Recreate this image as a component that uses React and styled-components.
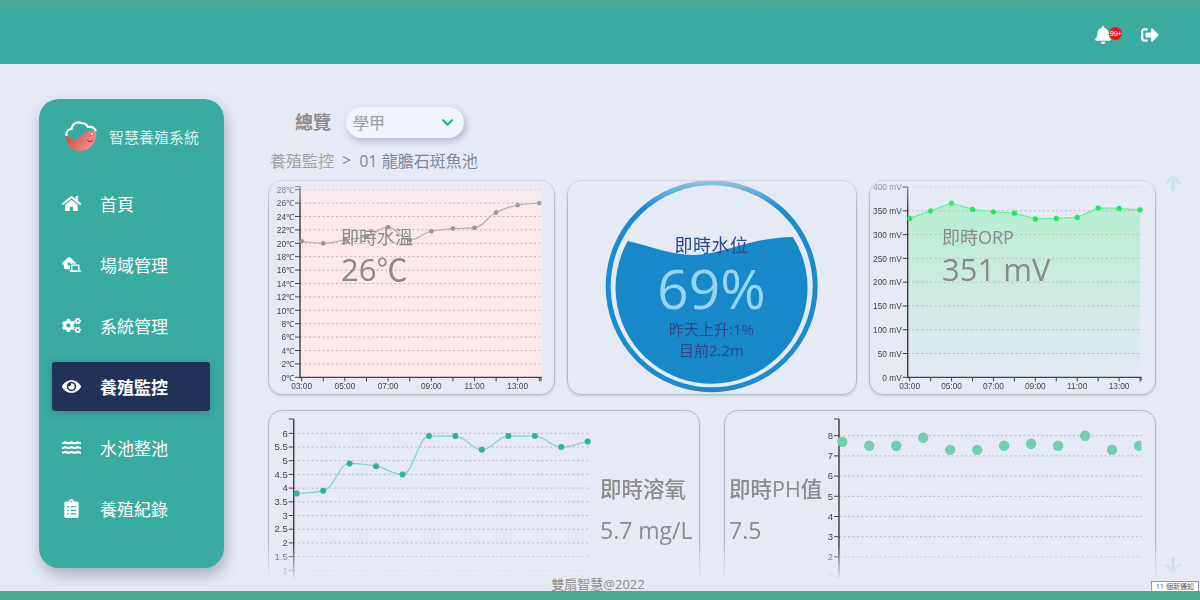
import React from "react";
import styled, { createGlobalStyle } from "styled-components";
import {
  FaHome,
  FaEye,
  FaCogs,
  FaWater,
  FaClipboardList,
  FaBell,
  FaSignOutAlt,
  FaChevronDown,
} from "react-icons/fa";
import { FaHouseLaptop } from "react-icons/fa6";
import { ArrowUp, ArrowDown } from "lucide-react";

const FONT = `"Open Sans", "Noto Sans CJK TC", sans-serif`;

const GlobalStyle = createGlobalStyle`
  html, body { margin: 0; padding: 0; height: 100%; }
  body { background: #e6eaf5; font-family: ${FONT}; overflow: hidden; }
`;

const Page = styled.div`
  width: 1200px;
  height: 600px;
  display: flex;
  flex-direction: column;
  position: relative;
  overflow: hidden;
`;

// Header
const Header = styled.header`
  height: 64px;
  flex: none;
  background: linear-gradient(#4fa88f 0, #3bab9f 11px, #3aaba1 100%);
  display: flex;
  align-items: center;
  justify-content: flex-end;
  gap: 29px;
  padding: 5px 41px 0 0;
  box-sizing: border-box;
  color: #fff;
`;

const BellWrap = styled.div`
  position: relative;
  display: flex;
  width: 18px;
  font-size: 18px;
`;

const Badge = styled.span`
  position: absolute;
  left: 15px;
  top: 1px;
  width: 13px;
  height: 13px;
  border-radius: 50%;
  background: #f01414;
  color: #fff;
  font-size: 8px;
  line-height: 13px;
  text-align: center;
  font-family: "Liberation Sans", sans-serif;
  letter-spacing: -0.6px;
`;

const Body = styled.div`
  height: 514px;
  flex: none;
  display: flex;
`;

// Sidebar
const Sidebar = styled.aside`
  width: 185px;
  height: 469px;
  flex: none;
  margin: 35px 0 0 39px;
  box-sizing: border-box;
  padding: 20px 14px 0 13px;
  background: #3aaba1;
  border-radius: 20px;
  box-shadow: 2px 7px 14px rgba(70, 80, 110, 0.38);
`;

const Brand = styled.div`
  height: 34px;
  display: flex;
  align-items: center;
  gap: 12px;
  padding-left: 13px;
  margin-bottom: 26px;
  color: #d8f1ec;
  font-size: 15px;
  white-space: nowrap;
`;

const Nav = styled.nav`
  display: flex;
  flex-direction: column;
  gap: 12px;
`;

const NavItem = styled.div`
  height: 49px;
  display: flex;
  align-items: center;
  gap: 19px;
  padding-left: 10px;
  border-radius: 3px;
  font-size: 17px;
  color: #fff;
  font-weight: ${(p) => (p.$active ? 700 : 400)};
  background: ${(p) => (p.$active ? "#213158" : "transparent")};
  box-shadow: ${(p) => (p.$active ? "0 2px 8px rgba(30, 60, 90, 0.3)" : "none")};
`;

const NavIcon = styled.span`
  width: 19px;
  display: flex;
  justify-content: center;
  font-size: 19px;
`;

// Main
const Main = styled.main`
  margin-left: 44px;
  flex: 1;
  min-width: 0;
  display: flex;
  flex-direction: column;
`;

const TitleRow = styled.div`
  height: 31px;
  margin-top: 43px;
  display: flex;
  align-items: center;
  gap: 15px;
  padding-left: 27px;
`;

const Title = styled.h1`
  margin: -4px 0 0;
  font-size: 18px;
  font-weight: 700;
  color: #8b8b8b;
`;

const Select = styled.div`
  width: 118px;
  height: 31px;
  box-sizing: border-box;
  display: flex;
  align-items: center;
  justify-content: space-between;
  padding: 0 10px 2px 7px;
  border-radius: 16px;
  background: #f1f4fb;
  box-shadow: 2px 3px 7px rgba(80, 90, 120, 0.35);
  color: #a0a0a0;
  font-size: 16px;
  svg {
    color: #2aaa98;
    font-size: 13px;
    margin-top: 2px;
  }
`;

const Crumb = styled.div`
  height: 20px;
  margin-top: 12px;
  padding-left: 2px;
  display: flex;
  align-items: center;
  gap: 8px;
  font-size: 16px;
  color: #7f8a96;
  span:first-child {
    color: #a2a2a2;
  }
`;

const ScrollArea = styled.div`
  margin-top: 4px;
  height: 406px;
  display: flex;
  gap: 8px;
  padding-top: 6px;
  box-sizing: border-box;
  -webkit-mask-image: linear-gradient(rgba(0, 0, 0, 0.25) 0, #000 34px, #000 370px, transparent 406px);
  mask-image: linear-gradient(rgba(0, 0, 0, 0.25) 0, #000 34px, #000 370px, transparent 406px);
`;

const Rows = styled.div`
  width: 888px;
  flex: none;
  display: flex;
  flex-direction: column;
  gap: 15px;
`;

const TopRow = styled.div`
  display: flex;
  gap: 12px;
`;

const BottomRow = styled.div`
  display: flex;
  gap: 24px;
`;

const Card = styled.section`
  position: relative;
  flex: none;
  box-sizing: border-box;
  width: ${(p) => p.$w}px;
  height: ${(p) => p.$h}px;
  border: 1px solid #b6b9c6;
  border-radius: 14px;
  box-shadow: 0 1px 2px rgba(90, 95, 120, 0.25);
`;

const WideCard = styled(Card)`
  display: flex;
  align-items: flex-start;
`;

const Overlay = styled.div`
  position: absolute;
  left: 72px;
  top: 44px;
  color: #8a8a8a;
  pointer-events: none;
`;

const OverlayLabel = styled.div`
  font-size: 18px;
  line-height: 24px;
`;

const OverlayValue = styled.div`
  font-size: 31px;
  line-height: 38px;
  margin-top: 1px;
  white-space: nowrap;
`;

const Info = styled.div`
  flex: none;
  box-sizing: border-box;
  width: ${(p) => p.$w}px;
  padding-top: 62px;
  padding-left: ${(p) => p.$pad}px;
  color: #8c8c8c;
  white-space: nowrap;
`;

const InfoLabel = styled.div`
  font-size: 21.5px;
  line-height: 32px;
  font-weight: 500;
`;

const InfoValue = styled.div`
  font-size: 23px;
  line-height: 30px;
  margin-top: 10px;
`;

const ChartSvg = styled.svg`
  display: block;
  flex: none;
  text {
    font-family: "Liberation Sans", sans-serif;
    font-size: ${(p) => p.$fs}px;
    fill: #454545;
  }
`;

const Rail = styled.div`
  width: 22px;
  height: 404px;
  margin: -8px 0 0 -2px;
  display: flex;
  flex-direction: column;
  justify-content: space-between;
  color: #abdcdc;
`;

// Water gauge
const GaugeText = styled.div`
  position: absolute;
  inset: 0;
  display: flex;
  flex-direction: column;
  align-items: center;
  color: #2a4a86;
  padding-top: 52px;
  padding-right: 1px;
`;

const GaugeTitle = styled.div`
  font-size: 18px;
  line-height: 24px;
  letter-spacing: 0.5px;
`;

const GaugePercent = styled.div`
  font-size: 55px;
  line-height: 62px;
  font-weight: 400;
  color: #95d6f8;
`;

const GaugeSub = styled.div`
  font-size: 15px;
  line-height: 21px;
`;

const Copyright = styled.div`
  height: 13px;
  flex: none;
  line-height: 13px;
  padding-right: 4px;
  text-align: center;
  font-size: 13px;
  color: #8f8f8f;
`;

const FootBar = styled.footer`
  height: 9px;
  flex: none;
  background: #4da890;
`;

const Toast = styled.div`
  position: absolute;
  right: 1px;
  bottom: 9px;
  width: 48px;
  height: 10px;
  box-sizing: border-box;
  background: #fff;
  border: 1px solid #999;
  border-bottom: 0;
  font-size: 7px;
  line-height: 9px;
  text-align: center;
  color: #555;
  white-space: nowrap;
`;

// monotone cubic path through the points, like d3 curveMonotoneX
const curvePath = (pts) => {
  const slopes = pts.slice(1).map((p, i) => (p.y - pts[i].y) / (p.x - pts[i].x));
  const tangents = pts.map((_, i) => {
    if (i === 0) return slopes[0];
    if (i === pts.length - 1) return slopes[i - 1];
    const a = slopes[i - 1];
    const b = slopes[i];
    if (a * b <= 0) return 0;
    return (2 * a * b) / (a + b);
  });
  let d = `M${pts[0].x} ${pts[0].y}`;
  for (let i = 1; i < pts.length; i++) {
    const dx = (pts[i].x - pts[i - 1].x) / 2.4;
    d += ` C${pts[i - 1].x + dx} ${pts[i - 1].y + tangents[i - 1] * dx} ${pts[i].x - dx} ${pts[i].y - tangents[i] * dx} ${pts[i].x} ${pts[i].y}`;
  }
  return d;
};

const straightPath = (pts) => pts.map((p, i) => `${i ? "L" : "M"}${p.x} ${p.y}`).join(" ");

const HOURS = ["03:00", "04:00", "05:00", "06:00", "07:00", "08:00", "09:00", "10:00", "11:00", "12:00", "13:00", "14:00"];

// All chart coordinates are given in the frame of the svg viewBox
const LineChart = ({ box, fs, axisX, top, bottom, gridEnd, ticks, xFirst, xLast, values, toY, xLabels, bg, fillId, line, dot, dotR, curved, clip }) => {
  const step = (xLast - xFirst) / (values.length - 1);
  const pts = values.map((v, i) => ({ x: xFirst + step * i, y: toY(v) }));
  const path = curved ? curvePath(pts) : straightPath(pts);
  const clipId = `clip-${axisX}`;
  return (
    <ChartSvg $fs={fs} width={box[2]} height={box[3]} viewBox={box.join(" ")}>
      {fillId && (
        <defs>
          <linearGradient id={fillId} x1="0" y1="0" x2="0" y2="1">
            <stop offset="0" stopColor="#a9efc6" stopOpacity="0.8" />
            <stop offset="1" stopColor="#a9efc6" stopOpacity="0.02" />
          </linearGradient>
        </defs>
      )}
      <clipPath id={clipId}>
        <rect x={axisX - 6} y={top - 5} width={gridEnd - axisX + 6} height={bottom - top + 10} />
      </clipPath>
      {bg && <rect x={axisX} y={top} width={gridEnd - axisX} height={bottom - top} fill={bg} />}
      {fillId && (
        <path
          d={`${path} L${pts[pts.length - 1].x} ${bottom} L${pts[0].x} ${bottom} Z`}
          fill={`url(#${fillId})`}
        />
      )}
      {ticks.map((t) => (
        <g key={t.label}>
          {t.v !== 0 && (
            <line x1={axisX} x2={gridEnd} y1={toY(t.v)} y2={toY(t.v)} stroke="#b9b9bd" strokeWidth="1" strokeDasharray="2 2.5" />
          )}
          <line x1={axisX - 5} x2={axisX} y1={toY(t.v)} y2={toY(t.v)} stroke="#444" />
          <text x={axisX - 6} y={toY(t.v) + 3.2} textAnchor="end">
            {t.label}
          </text>
        </g>
      ))}
      <line x1={axisX - 5} x2={axisX} y1={top} y2={top} stroke="#444" />
      <line x1={axisX} x2={axisX} y1={top} y2={bottom + 1} stroke="#444" strokeWidth="1.5" />
      {xLabels && (
        <g>
          <line x1={axisX} x2={gridEnd} y1={bottom} y2={bottom} stroke="#444" strokeWidth="1.2" />
          {pts.map((p, i) => (
            <g key={HOURS[i]}>
              <line x1={p.x} x2={p.x} y1={bottom} y2={bottom + 4} stroke="#444" />
              {i % 2 === 0 && (
                <text x={p.x} y={bottom + 12} textAnchor="middle">
                  {HOURS[i]}
                </text>
              )}
            </g>
          ))}
          <line x1={gridEnd - 1} x2={gridEnd - 1} y1={bottom} y2={bottom + 4} stroke="#444" />
        </g>
      )}
      <g clipPath={clip ? `url(#${clipId})` : undefined}>
        {line && <path d={path} fill="none" stroke={line} strokeWidth="1.2" />}
        {pts.map((p) => (
          <circle key={p.x} cx={p.x} cy={p.y} r={dotR} fill={dot} />
        ))}
      </g>
    </ChartSvg>
  );
};

const range = (from, count, inc) => Array.from({ length: count }, (_, i) => from + inc * i);

const TempChart = () => (
  <LineChart
    box={[269, 182, 285, 213]}
    fs={8.3}
    axisX={300}
    top={187.5}
    bottom={378.3}
    gridEnd={542}
    ticks={range(0, 15, 2).map((v) => ({ v, label: `${v}℃` }))}
    xFirst={301.7}
    xLast={539.3}
    values={[20.3, 20, 20.5, 21, 22.4, 20.5, 21.8, 22.2, 22.3, 24.6, 25.7, 26]}
    toY={(v) => 378.3 - v * 6.7}
    xLabels
    bg="#fbe9ea"
    line="#b5aea8"
    dot="#999"
    dotR={2.4}
    curved
  />
);

const OrpChart = () => (
  <LineChart
    box={[870, 182, 285, 213]}
    fs={8.3}
    axisX={907.7}
    top={188}
    bottom={378.3}
    gridEnd={1142}
    ticks={range(0, 9, 50).map((v) => ({ v, label: `${v} mV` }))}
    xFirst={909.7}
    xLast={1140}
    values={[334, 350, 366, 353, 348, 345, 333, 334, 336, 356, 355, 352]}
    toY={(v) => 378.3 - v * 0.4757}
    xLabels
    fillId="orpFill"
    line="#62f0a2"
    dot="#1ee963"
    dotR={2.6}
  />
);

const OxygenChart = () => (
  <LineChart
    box={[269, 412, 331, 190]}
    fs={9.5}
    axisX={293.7}
    top={420}
    bottom={590}
    gridEnd={590}
    ticks={range(1, 11, 0.5).map((v) => ({ v, label: `${v}` }))}
    xFirst={296.7}
    xLast={587.7}
    values={[3.8, 3.9, 4.9, 4.8, 4.5, 5.9, 5.9, 5.4, 5.9, 5.9, 5.5, 5.7]}
    toY={(v) => 434.3 + (6 - v) * 27.4}
    line="#7fd6c3"
    dot="#2fb29e"
    dotR={3}
    curved
  />
);

const PhChart = () => (
  <LineChart
    box={[825, 412, 330, 190]}
    fs={9.5}
    axisX={839}
    top={420}
    bottom={590}
    gridEnd={1141.5}
    ticks={range(1, 8, 1).map((v) => ({ v, label: `${v}` }))}
    xFirst={842.3}
    xLast={1139}
    values={[7.7, 7.5, 7.5, 7.9, 7.3, 7.3, 7.5, 7.6, 7.5, 8, 7.3, 7.5]}
    toY={(v) => 436.7 + (8 - v) * 20.2}
    dot="#73cfae"
    dotR={5.2}
    clip
  />
);

const WaterGauge = () => (
  <>
    <svg width="288" height="213" viewBox="568 182 288 213" style={{ display: "block" }}>
      <circle cx="711.7" cy="287.3" r="103.5" fill="none" stroke="#1a8bcf" strokeWidth="5" />
      <path
        d="M627.7 242 C650 247 672 256 693 256 C722 256 752 238 793 238 A96 96 0 1 1 627.7 242 Z"
        fill="#1789c9"
      />
    </svg>
    <GaugeText>
      <GaugeTitle>即時水位</GaugeTitle>
      <GaugePercent>69%</GaugePercent>
      <GaugeSub>昨天上升:1%</GaugeSub>
      <GaugeSub>目前2.2m</GaugeSub>
    </GaugeText>
  </>
);

const Logo = () => (
  <svg width="32" height="32" viewBox="0 0 32 32">
    <defs>
      <linearGradient id="fishBody" x1="0" y1="0" x2="1" y2="0.4">
        <stop offset="0" stopColor="#d8423c" />
        <stop offset="1" stopColor="#f58a88" />
      </linearGradient>
    </defs>
    <path d="M1 16 C7 21 13 20 17 15 C21 11 27 10 31 11 C32 22 25 31 16 31 C8 31 1 25 1 16 Z" fill="url(#fishBody)" />
    <path
      d="M1.5 15 C1 11 4 9 6.5 9 C7 4 12 1 16 3 C19 3 22 5 23 7 C27 6.5 30 8 30.5 10.5"
      fill="none"
      stroke="#fff"
      strokeWidth="2.2"
      strokeLinecap="round"
    />
    <path d="M22 20 C24 22 26 22 28 20" fill="none" stroke="#5a2020" strokeWidth="0.8" />
    <circle cx="27" cy="14" r="1" fill="#fff" />
  </svg>
);

const NAV = [
  { label: "首頁", icon: <FaHome /> },
  { label: "場域管理", icon: <FaHouseLaptop /> },
  { label: "系統管理", icon: <FaCogs /> },
  { label: "養殖監控", icon: <FaEye />, active: true },
  { label: "水池整池", icon: <FaWater /> },
  { label: "養殖紀錄", icon: <FaClipboardList /> },
];

export default function App() {
  return (
    <Page>
      <GlobalStyle />
      <Header>
        <BellWrap>
          <FaBell />
          <Badge>99+</Badge>
        </BellWrap>
        <FaSignOutAlt size={18} />
      </Header>
      <Body>
        <Sidebar>
          <Brand>
            <Logo />
            智慧養殖系統
          </Brand>
          <Nav>
            {NAV.map((item) => (
              <NavItem key={item.label} $active={item.active}>
                <NavIcon>{item.icon}</NavIcon>
                {item.label}
              </NavItem>
            ))}
          </Nav>
        </Sidebar>
        <Main>
          <TitleRow>
            <Title>總覽</Title>
            <Select>
              學甲
              <FaChevronDown />
            </Select>
          </TitleRow>
          <Crumb>
            <span>養殖監控</span>
            <span>&gt;</span>
            <span>01 龍膽石斑魚池</span>
          </Crumb>
          <ScrollArea>
            <Rows>
              <TopRow>
                <Card $w={287} $h={215}>
                  <TempChart />
                  <Overlay>
                    <OverlayLabel>即時水溫</OverlayLabel>
                    <OverlayValue>26℃</OverlayValue>
                  </Overlay>
                </Card>
                <Card $w={290} $h={215}>
                  <WaterGauge />
                </Card>
                <Card $w={287} $h={215}>
                  <OrpChart />
                  <Overlay>
                    <OverlayLabel>即時ORP</OverlayLabel>
                    <OverlayValue>351 mV</OverlayValue>
                  </Overlay>
                </Card>
              </TopRow>
              <BottomRow>
                <WideCard $w={432} $h={200}>
                  <OxygenChart />
                  <Info $w={100} $pad={0}>
                    <InfoLabel>即時溶氧</InfoLabel>
                    <InfoValue>5.7 mg/L</InfoValue>
                  </Info>
                </WideCard>
                <WideCard $w={432} $h={200}>
                  <Info $w={100} $pad={4}>
                    <InfoLabel>即時PH值</InfoLabel>
                    <InfoValue>7.5</InfoValue>
                  </Info>
                  <PhChart />
                </WideCard>
              </BottomRow>
            </Rows>
            <Rail>
              <ArrowUp size={22} strokeWidth={3.2} />
              <ArrowDown size={22} strokeWidth={3.2} />
            </Rail>
          </ScrollArea>
        </Main>
      </Body>
      <Copyright>雙扇智慧@2022</Copyright>
      <FootBar />
      <Toast>11 個新通知</Toast>
    </Page>
  );
}
